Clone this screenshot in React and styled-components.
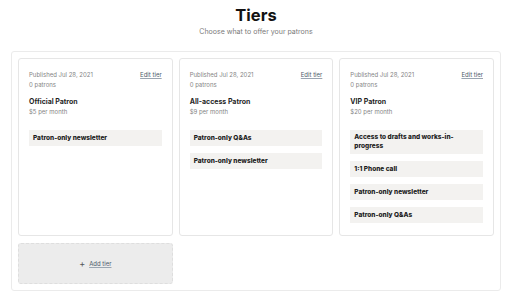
import styled, { createGlobalStyle } from "styled-components";

const Global = createGlobalStyle`
  body {
    margin: 0;
    background: #ffffff;
    font-family: "Inter", "Liberation Sans", sans-serif;
    color: #1f1f1f;
  }
`;

const Page = styled.div`
  width: 512px;
  height: 300px;
  padding: 5px 11px 0;
  box-sizing: border-box;
`;

const Header = styled.div`
  text-align: center;
`;

const Title = styled.h1`
  margin: 0;
  font-size: 16.5px;
  line-height: 20px;
  font-weight: 700;
  color: #121212;
`;

const Subtitle = styled.p`
  margin: 2px 0 0;
  font-size: 7px;
  line-height: 10px;
  color: #7a7a7a;
`;

const Board = styled.div`
  margin-top: 14px;
  width: 490px;
  border: 1px solid #ebebeb;
  border-radius: 3px;
  padding: 6px;
  box-sizing: border-box;
  display: grid;
  grid-template-columns: repeat(3, 1fr);
  gap: 7px 6px;
  align-items: start;
`;

const Card = styled.div`
  border: 1px solid #e6e6e6;
  border-radius: 3px;
  padding: 11px 10px 11px;
  min-height: 178px;
  box-sizing: border-box;
  display: flex;
  flex-direction: column;
`;

const MetaRow = styled.div`
  display: flex;
  justify-content: space-between;
  align-items: flex-start;
`;

const Meta = styled.div`
  font-size: 6px;
  line-height: 10px;
  color: #858585;
`;

const EditLink = styled.a`
  font-size: 6px;
  line-height: 10px;
  color: #4d5b6a;
  text-decoration: underline;
  text-decoration-color: #9aa5b1;
`;

const TierName = styled.div`
  margin-top: 7px;
  font-size: 7px;
  line-height: 10px;
  font-weight: 700;
  color: #1f1f1f;
`;

const Price = styled.div`
  font-size: 6px;
  line-height: 10px;
  color: #858585;
`;

const Benefits = styled.div`
  margin-top: 13px;
  display: flex;
  flex-direction: column;
  gap: 7px;
`;

const Benefit = styled.div`
  background: #f3f2f0;
  padding: 3px 4px;
  min-height: 16px;
  box-sizing: border-box;
  font-size: 6.5px;
  line-height: 9px;
  font-weight: 800;
  color: #1c1c1c;
  display: flex;
  align-items: center;
`;

const AddCard = styled.div`
  height: 41px;
  background: #ececec;
  border: 1px dashed #dedede;
  border-radius: 3px;
  box-sizing: border-box;
  display: flex;
  align-items: center;
  justify-content: center;
  gap: 4px;
`;

const Plus = styled.span`
  font-size: 9px;
  line-height: 10px;
  color: #555;
`;

const tiers = [
  {
    name: "Official Patron",
    price: "$5 per month",
    benefits: ["Patron-only newsletter"],
  },
  {
    name: "All-access Patron",
    price: "$9 per month",
    benefits: ["Patron-only Q&As", "Patron-only newsletter"],
  },
  {
    name: "VIP Patron",
    price: "$20 per month",
    benefits: [
      "Access to drafts and works-in-progress",
      "1:1 Phone call",
      "Patron-only newsletter",
      "Patron-only Q&As",
    ],
  },
];

const TierCard = ({ tier }) => (
  <Card>
    <MetaRow>
      <Meta>Published Jul 28, 2021</Meta>
      <EditLink>Edit tier</EditLink>
    </MetaRow>
    <Meta>0 patrons</Meta>
    <TierName>{tier.name}</TierName>
    <Price>{tier.price}</Price>
    <Benefits>
      {tier.benefits.map((b) => (
        <Benefit key={b}>{b}</Benefit>
      ))}
    </Benefits>
  </Card>
);

export default function App() {
  return (
    <Page>
      <Global />
      <Header>
        <Title>Tiers</Title>
        <Subtitle>Choose what to offer your patrons</Subtitle>
      </Header>
      <Board>
        {tiers.map((t) => (
          <TierCard key={t.name} tier={t} />
        ))}
        <AddCard>
          <Plus>+</Plus>
          <EditLink>Add tier</EditLink>
        </AddCard>
      </Board>
    </Page>
  );
}
